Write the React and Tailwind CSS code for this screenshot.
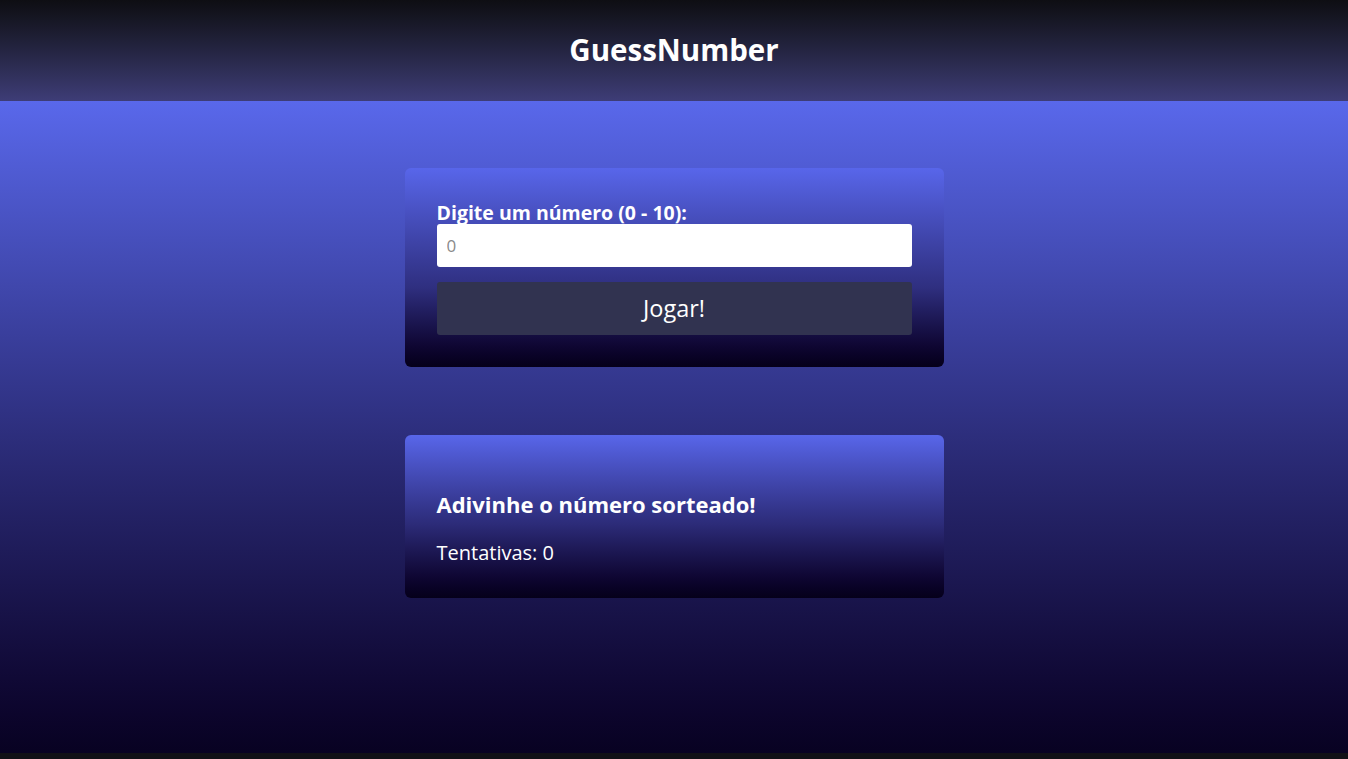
import React, { useState } from 'react';

const App = () => {
    const [value, setValue] = useState('');
    const [tries, setTries] = useState(0);

    return (
        <div className="min-h-screen bg-[#111116] flex flex-col" style={{ fontFamily: '"Open Sans", "Noto Sans", sans-serif' }}>
            {/* Header */}
            <header className="h-[101px] flex items-center justify-center bg-gradient-to-b from-[#0e0e13] to-[#3e3d77]">
                <h1 className="text-[29.5px] font-bold text-white">GuessNumber</h1>
            </header>

            {/* Main */}
            <main className="h-[652px] bg-gradient-to-b from-[#5968eb] to-[#080222] flex flex-col items-center pt-[67px] gap-[68px]">
                <form
                    className="w-[539px] h-[199px] rounded-md bg-gradient-to-b from-[#5866ea] via-[#2f2f80] via-60% to-[#05001a] px-8 pt-[33px] flex flex-col"
                    onSubmit={e => { e.preventDefault(); setTries(t => t + 1); }}
                >
                    <label className="text-white font-bold text-[19.5px] leading-[23px]">Digite um número (0 - 10):</label>
                    <input
                        type="number"
                        value={value}
                        onChange={e => setValue(e.target.value)}
                        placeholder="0"
                        className="h-[43px] rounded-[3px] bg-white px-[10px] text-[17px] text-gray-800 placeholder:text-[#8a8a8a] outline-none"
                    />
                    <button
                        type="submit"
                        className="mt-[15px] h-[53px] rounded-[3px] bg-[#313350] text-white text-[23.5px]"
                    >
                        Jogar!
                    </button>
                </form>

                <div className="w-[539px] h-[163px] rounded-md bg-gradient-to-b from-[#5866ea] via-[#2c2b78] via-55% to-[#05001a] px-8 pt-[54px] flex flex-col">
                    <h2 className="text-white font-bold text-[22px] leading-[30px]">Adivinhe o número sorteado!</h2>
                    <p className="mt-[21px] text-white text-[20px] leading-[26px]">Tentativas: {tries}</p>
                </div>
            </main>
        </div>
    );
};

export default App;
